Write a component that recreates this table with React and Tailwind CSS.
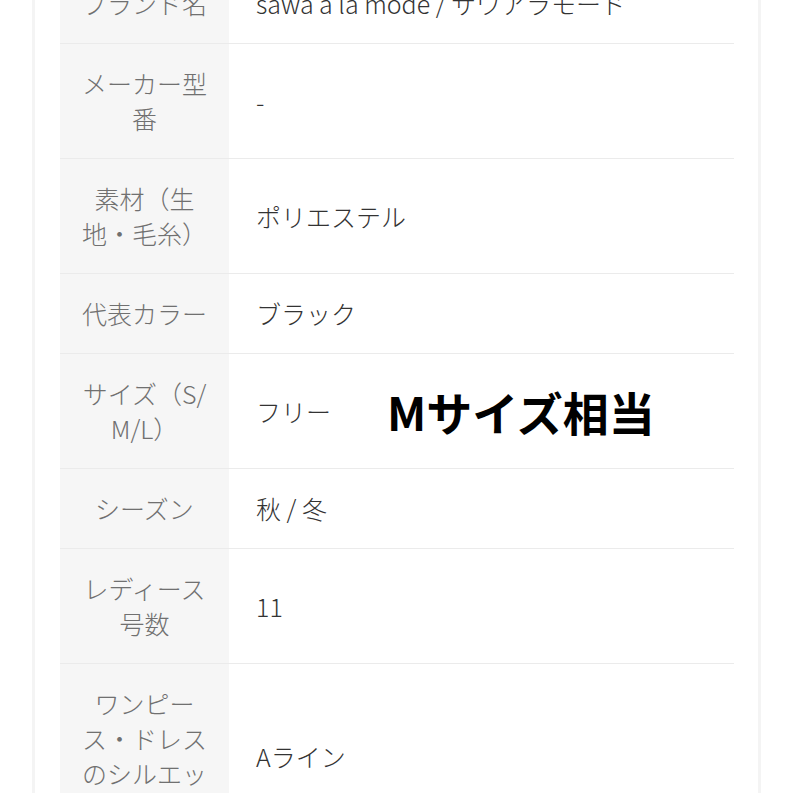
const ROWS = [
  { label: 'ブランド名', value: 'sawa a la mode / サワアラモード' },
  { label: 'メーカー型番', value: '-' },
  { label: '素材（生地・毛糸）', value: 'ポリエステル' },
  { label: '代表カラー', value: 'ブラック' },
  { label: 'サイズ（S/M/L）', value: 'フリー', note: 'Mサイズ相当' },
  { label: 'シーズン', value: '秋 / 冬' },
  { label: 'レディース号数', value: '11' },
  { label: 'ワンピース・ドレスのシルエット', value: 'Aライン' },
]

const FONT = {
  fontFamily: '"Noto Sans CJK JP", "Noto Sans", sans-serif',
}

function SpecRow({ row }) {
  return (
    <div className="flex border-b border-[#ebebeb]">
      <div className="w-[169px] shrink-0 bg-[#f6f6f6] px-[20px] py-[22px] text-center text-[25px] font-light leading-[35px] text-[#707070] break-all">
        {row.label}
      </div>
      <div className="flex flex-1 items-center px-[27px] text-[25px] font-light leading-[35px] text-[#333]">
        <span>{row.value}</span>
        {row.note && (
          <span className="ml-[56px] text-[46px] font-bold leading-none text-black">
            {row.note}
          </span>
        )}
      </div>
    </div>
  )
}

export default function App() {
  return (
    <div className="h-[793px] overflow-hidden bg-white" style={FONT}>
      <div className="mx-[32px] -mt-[36px] border-x-[3px] border-[#f4f4f4] bg-white pl-[25px] pr-[24px]">
        {ROWS.map((row) => (
          <SpecRow key={row.label} row={row} />
        ))}
      </div>
    </div>
  )
}
